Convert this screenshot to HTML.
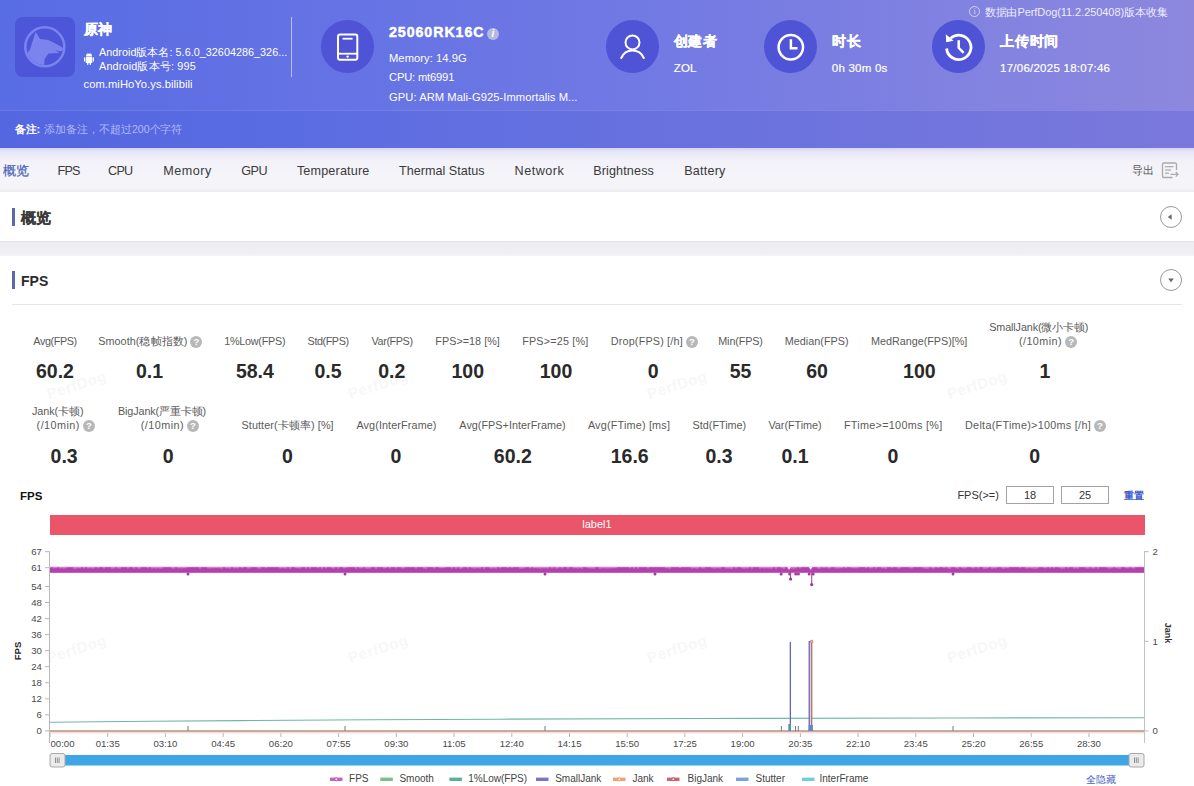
<!DOCTYPE html><html><head><meta charset="utf-8"><style>
*{margin:0;padding:0;box-sizing:border-box}
html,body{width:1194px;height:786px;overflow:hidden;background:#fff;font-family:"Liberation Sans",sans-serif;color:#333}
.a{position:absolute;white-space:nowrap}
#hdr{position:absolute;left:0;top:0;width:1194px;height:148px;background:linear-gradient(90deg,#586ce4 0%,#6f78e4 50%,#8d88de 100%)}
#note{position:absolute;left:0;top:110px;width:1194px;height:38px;background:linear-gradient(90deg,#5466e0 0%,#5a6ce2 23%,#6a72de 60%,#7a78dc 100%);border-top:1px solid rgba(255,255,255,0.13)}
.w{color:#fff}
.circ{position:absolute;width:53px;height:53px;border-radius:50%;background:#4f53d5}
.circ svg{position:absolute;left:0;top:0}
#nav{position:absolute;left:0;top:148px;width:1194px;height:44px;background:linear-gradient(180deg,#d4d4f4 0%,#e8e7f7 9%,#f3f2f9 30%,#f5f5f9 92%,#ebebef 100%)}
.bar{position:absolute;left:12px;width:3px;background:#5a6aa8}
.rbtn{position:absolute;width:22px;height:22px;border:1px solid #8a8a8a;border-radius:50%}
.q{display:inline-block;width:12px;height:12px;border-radius:50%;background:#b8b8b8;color:#fff;font-size:9.5px;line-height:12px;text-align:center;font-weight:bold;vertical-align:top;margin-top:0px;margin-left:3px}
</style></head><body>
<div id="hdr"></div><div id="note"></div>
<div class="a" style="left:15px;top:17px;width:60px;height:60px;border-radius:8px;background:#4d55d9"></div>
<svg class="a" style="left:15px;top:17px" width="60" height="60" viewBox="0 0 60 60">
<defs><clipPath id="lc"><circle cx="29.8" cy="29.8" r="18.3"/></clipPath></defs>
<circle cx="29.8" cy="29.8" r="19.5" fill="none" stroke="#7b84ee" stroke-width="2.5"/>
<path clip-path="url(#lc)" d="M20.6 14.9 L25 22 C28 22.3 31 22.5 33 23 L38 25.3 L46 29.6 L48.5 31.8 L46.5 34.2 L40.5 33.6 L44.5 36 L33.5 36.5 L29.5 42 L29 52 L8 52 L8 42 L14.9 32.8 Z" fill="#7b84ee"/>
</svg>
<div class="a" style="left:83.50px;top:22.73px;font-size:13.90px;line-height:13.90px;color:#fff;font-weight:bold;-webkit-text-stroke:0.3px #fff;letter-spacing:0.8px">原神</div>
<svg class="a" style="left:83px;top:52px" width="12" height="14" viewBox="0 0 12 14">
<path d="M2.9 4.4 A3.1 3 0 0 1 9.1 4.4 Z" fill="#fff"/>
<line x1="4" y1="1.3" x2="4.8" y2="2.4" stroke="#fff" stroke-width="0.6"/><line x1="8" y1="1.3" x2="7.2" y2="2.4" stroke="#fff" stroke-width="0.6"/>
<rect x="2.7" y="5" width="6.6" height="6" rx="0.7" fill="#fff"/>
<rect x="1" y="5.3" width="1.2" height="4.2" rx="0.6" fill="#fff"/>
<rect x="9.8" y="5.3" width="1.2" height="4.2" rx="0.6" fill="#fff"/>
<rect x="4" y="10" width="1.4" height="3" rx="0.7" fill="#fff"/>
<rect x="6.6" y="10" width="1.4" height="3" rx="0.7" fill="#fff"/>
</svg>
<div class="a" style="left:99.00px;top:47.46px;font-size:10.80px;line-height:10.80px;color:#fff"><span style="letter-spacing:0.03px">Android版本名: 5.6.0_32604286_326...</span></div>
<div class="a" style="left:99.00px;top:60.86px;font-size:10.80px;line-height:10.80px;color:#fff"><span style="letter-spacing:0.18px">Android版本号: 995</span></div>
<div class="a" style="left:83.50px;top:78.52px;font-size:11.20px;line-height:11.20px;color:#fff"><span style="letter-spacing:0.06px">com.miHoYo.ys.bilibili</span></div>
<div class="a" style="left:291px;top:17px;width:1px;height:60px;background:rgba(255,255,255,0.55)"></div>
<div class="circ" style="left:320.8px;top:20.1px"><svg width="53" height="53" viewBox="0 0 53 53"><rect x="17" y="14.6" width="19.3" height="25.2" rx="2" fill="none" stroke="#fff" stroke-width="2"/><line x1="21.6" y1="18.7" x2="31.6" y2="18.7" stroke="#fff" stroke-width="1.8"/><line x1="17" y1="33.7" x2="36.3" y2="33.7" stroke="#fff" stroke-width="1.8"/><circle cx="26.6" cy="36.6" r="1.2" fill="#fff"/></svg></div>
<div class="a" style="left:389.00px;top:25.48px;font-size:14.20px;line-height:14.20px;color:#fff;font-weight:bold;-webkit-text-stroke:0.45px #fff"><span style="letter-spacing:0.95px">25060RK16C</span></div>
<div class="a" style="left:487px;top:27.5px;width:12px;height:12px;border-radius:50%;background:#b6b9df;color:#fff;font-size:10px;font-style:italic;font-weight:bold;text-align:center;line-height:12px">i</div>
<div class="a" style="left:389.00px;top:52.52px;font-size:11.20px;line-height:11.20px;color:#fff"><span style="letter-spacing:0.05px">Memory: 14.9G</span></div>
<div class="a" style="left:389.00px;top:72.42px;font-size:11.20px;line-height:11.20px;color:#fff"><span style="letter-spacing:-0.18px">CPU: mt6991</span></div>
<div class="a" style="left:389.00px;top:91.82px;font-size:11.20px;line-height:11.20px;color:#fff"><span style="letter-spacing:0.06px">GPU: ARM Mali-G925-Immortalis M...</span></div>
<div class="circ" style="left:606.0px;top:20.1px"><svg width="53" height="53" viewBox="0 0 53 53"><circle cx="26.5" cy="22.4" r="7" fill="none" stroke="#fff" stroke-width="2"/><path d="M15.2 38 A12.2 12.2 0 0 1 37.8 38" fill="none" stroke="#fff" stroke-width="2" stroke-linecap="round"/></svg></div>
<div class="a" style="left:673.70px;top:34.83px;font-size:13.90px;line-height:13.90px;color:#fff;font-weight:bold;-webkit-text-stroke:0.3px #fff;letter-spacing:0.8px">创建者</div>
<div class="a" style="left:673.70px;top:62.57px;font-size:11.50px;line-height:11.50px;color:#fff;-webkit-text-stroke:0.2px #fff"><span style="letter-spacing:0.18px">ZOL</span></div>
<div class="circ" style="left:763.5px;top:20.1px"><svg width="53" height="53" viewBox="0 0 53 53"><circle cx="26.8" cy="27.3" r="12.2" fill="none" stroke="#fff" stroke-width="2.5"/><path d="M26.9 19.3 V28.3 H33.5" fill="none" stroke="#fff" stroke-width="2.5"/></svg></div>
<div class="a" style="left:831.80px;top:34.83px;font-size:13.90px;line-height:13.90px;color:#fff;font-weight:bold;-webkit-text-stroke:0.3px #fff;letter-spacing:0.8px">时长</div>
<div class="a" style="left:831.80px;top:62.57px;font-size:11.50px;line-height:11.50px;color:#fff;-webkit-text-stroke:0.2px #fff"><span style="letter-spacing:0.23px">0h 30m 0s</span></div>
<div class="circ" style="left:931.5px;top:20.1px"><svg width="53" height="53" viewBox="0 0 53 53"><path d="M14.6 28.5 A12.2 12.2 0 1 0 18.6 18.3" fill="none" stroke="#fff" stroke-width="2.8"/><path d="M13.8 14.3 L14.2 22.2 L21.6 20.8 Z" fill="#fff"/><path d="M26.7 20.2 V27.8 L31.6 32.8" fill="none" stroke="#fff" stroke-width="2.5"/></svg></div>
<div class="a" style="left:1000.00px;top:34.83px;font-size:13.90px;line-height:13.90px;color:#fff;font-weight:bold;-webkit-text-stroke:0.3px #fff;letter-spacing:0.8px">上传时间</div>
<div class="a" style="left:1000.00px;top:62.57px;font-size:11.50px;line-height:11.50px;color:#fff;-webkit-text-stroke:0.2px #fff"><span style="letter-spacing:0.25px">17/06/2025 18:07:46</span></div>
<div class="a" style="left:969px;top:6px;width:11px;height:11px;border:1px solid rgba(255,255,255,0.6);border-radius:50%;color:rgba(255,255,255,0.75);font-size:8px;line-height:9px;text-align:center;font-family:Liberation Serif">i</div>
<div class="a" style="left:984.60px;top:6.69px;font-size:11.00px;line-height:11.00px;color:rgba(255,255,255,0.88)"><span style="letter-spacing:-0.07px">数据由PerfDog(11.2.250408)版本收集</span></div>
<div class="a" style="left:14.50px;top:123.69px;font-size:11.00px;line-height:11.00px;color:#fff;font-weight:bold">备注:</div>
<div class="a" style="left:44.40px;top:124.03px;font-size:10.60px;line-height:10.60px;color:rgba(200,206,255,0.8)"><span style="letter-spacing:-0.05px">添加备注，不超过200个字符</span></div>
<div id="nav"></div>
<div class="a" style="left:3.10px;top:164.73px;font-size:12.60px;line-height:12.60px;color:#4862b5;-webkit-text-stroke:0.2px #4862b5"><span style="letter-spacing:0.00px">概览</span></div>
<div class="a" style="left:57.50px;top:164.73px;font-size:12.60px;line-height:12.60px;color:#3a3a3a"><span style="letter-spacing:-0.80px">FPS</span></div>
<div class="a" style="left:108.10px;top:164.73px;font-size:12.60px;line-height:12.60px;color:#3a3a3a"><span style="letter-spacing:-0.80px">CPU</span></div>
<div class="a" style="left:163.30px;top:164.73px;font-size:12.60px;line-height:12.60px;color:#3a3a3a"><span style="letter-spacing:0.52px">Memory</span></div>
<div class="a" style="left:241.20px;top:164.73px;font-size:12.60px;line-height:12.60px;color:#3a3a3a"><span style="letter-spacing:-0.50px">GPU</span></div>
<div class="a" style="left:296.90px;top:164.73px;font-size:12.60px;line-height:12.60px;color:#3a3a3a"><span style="letter-spacing:0.17px">Temperature</span></div>
<div class="a" style="left:399.00px;top:164.73px;font-size:12.60px;line-height:12.60px;color:#3a3a3a"><span style="letter-spacing:0.02px">Thermal Status</span></div>
<div class="a" style="left:514.60px;top:164.73px;font-size:12.60px;line-height:12.60px;color:#3a3a3a"><span style="letter-spacing:0.50px">Network</span></div>
<div class="a" style="left:593.20px;top:164.73px;font-size:12.60px;line-height:12.60px;color:#3a3a3a"><span style="letter-spacing:0.13px">Brightness</span></div>
<div class="a" style="left:684.20px;top:164.73px;font-size:12.60px;line-height:12.60px;color:#3a3a3a"><span style="letter-spacing:0.21px">Battery</span></div>
<div class="a" style="left:1131.80px;top:165.32px;font-size:11.20px;line-height:11.20px;color:#555">导出</div>
<svg class="a" style="left:1161px;top:162px" width="19" height="17" viewBox="0 0 19 17">
<path d="M11.5 15.5 H2.8 A1.3 1.3 0 0 1 1.5 14.2 V2.3 A1.3 1.3 0 0 1 2.8 1 H14.2 A1.3 1.3 0 0 1 15.5 2.3 V8" fill="none" stroke="#aaa" stroke-width="1.3"/>
<line x1="4" y1="4.7" x2="12.5" y2="4.7" stroke="#aaa" stroke-width="1.2"/>
<line x1="4" y1="8" x2="10" y2="8" stroke="#aaa" stroke-width="1.2"/>
<line x1="4" y1="11.2" x2="8" y2="11.2" stroke="#aaa" stroke-width="1.2"/>
<path d="M9.5 12.3 H17 M14.8 10 L17 12.3 L14.8 14.6" fill="none" stroke="#aaa" stroke-width="1.2"/>
</svg>
<div class="a" style="left:0;top:192px;width:1194px;height:49px;background:#fff"></div>
<div class="a" style="left:0;top:241px;width:1194px;height:15px;background:linear-gradient(180deg,#e3e3e7 0%,#eeeef2 12%,#f0f0f4 80%,#f4f4f7 100%)"></div>
<div class="bar" style="top:208px;height:18px"></div>
<div class="a" style="left:20.70px;top:211.23px;font-size:14.50px;line-height:14.50px;color:#3a3a3a;font-weight:bold;-webkit-text-stroke:0.15px #3a3a3a">概览</div>
<div class="rbtn" style="left:1160px;top:205.5px;border-color:#999"></div>
<svg class="a" style="left:1160px;top:205.5px" width="22" height="22"><path d="M7.8 11 L11.6 8.3 V13.7 Z" fill="#666"/></svg>
<div class="bar" style="top:271px;height:18px"></div>
<div class="a" style="left:21.00px;top:273.55px;font-size:14.00px;line-height:14.00px;color:#2a2a2a;font-weight:bold">FPS</div>
<div class="rbtn" style="left:1160px;top:269px;border-color:#999"></div>
<svg class="a" style="left:1160px;top:269px" width="22" height="22"><path d="M8.2 9.6 H13.8 L11 13.3 Z" fill="#666"/></svg>
<div class="a" style="left:12px;top:304px;width:1170px;height:1px;background:#e6e6ea"></div>
<div class="a" style="left:-95.00px;top:335.96px;width:300px;text-align:center;font-size:10.80px;line-height:10.80px;color:#5a5a5a"><span style="letter-spacing:-0.40px">Avg(FPS)</span></div>
<div class="a" style="left:-45.00px;top:361.99px;width:200px;text-align:center;font-size:19.50px;line-height:19.50px;color:#2a2a2a;font-weight:bold">60.2</div>
<div class="a" style="left:0.30px;top:335.96px;width:300px;text-align:center;font-size:10.80px;line-height:10.80px;color:#5a5a5a"><span style="letter-spacing:0.06px">Smooth(稳帧指数)</span><span class="q">?</span></div>
<div class="a" style="left:49.50px;top:361.99px;width:200px;text-align:center;font-size:19.50px;line-height:19.50px;color:#2a2a2a;font-weight:bold">0.1</div>
<div class="a" style="left:104.70px;top:335.96px;width:300px;text-align:center;font-size:10.80px;line-height:10.80px;color:#5a5a5a"><span style="letter-spacing:-0.25px">1%Low(FPS)</span></div>
<div class="a" style="left:154.90px;top:361.99px;width:200px;text-align:center;font-size:19.50px;line-height:19.50px;color:#2a2a2a;font-weight:bold">58.4</div>
<div class="a" style="left:178.10px;top:335.96px;width:300px;text-align:center;font-size:10.80px;line-height:10.80px;color:#5a5a5a"><span style="letter-spacing:-0.43px">Std(FPS)</span></div>
<div class="a" style="left:228.00px;top:361.99px;width:200px;text-align:center;font-size:19.50px;line-height:19.50px;color:#2a2a2a;font-weight:bold">0.5</div>
<div class="a" style="left:242.10px;top:335.96px;width:300px;text-align:center;font-size:10.80px;line-height:10.80px;color:#5a5a5a"><span style="letter-spacing:-0.39px">Var(FPS)</span></div>
<div class="a" style="left:291.80px;top:361.99px;width:200px;text-align:center;font-size:19.50px;line-height:19.50px;color:#2a2a2a;font-weight:bold">0.2</div>
<div class="a" style="left:317.60px;top:335.96px;width:300px;text-align:center;font-size:10.80px;line-height:10.80px;color:#5a5a5a"><span style="letter-spacing:0.03px">FPS&gt;=18 [%]</span></div>
<div class="a" style="left:367.80px;top:361.99px;width:200px;text-align:center;font-size:19.50px;line-height:19.50px;color:#2a2a2a;font-weight:bold">100</div>
<div class="a" style="left:405.30px;top:335.96px;width:300px;text-align:center;font-size:10.80px;line-height:10.80px;color:#5a5a5a"><span style="letter-spacing:0.18px">FPS&gt;=25 [%]</span></div>
<div class="a" style="left:456.00px;top:361.99px;width:200px;text-align:center;font-size:19.50px;line-height:19.50px;color:#2a2a2a;font-weight:bold">100</div>
<div class="a" style="left:504.30px;top:335.96px;width:300px;text-align:center;font-size:10.80px;line-height:10.80px;color:#5a5a5a"><span style="letter-spacing:0.18px">Drop(FPS) [/h]</span><span class="q">?</span></div>
<div class="a" style="left:553.30px;top:361.99px;width:200px;text-align:center;font-size:19.50px;line-height:19.50px;color:#2a2a2a;font-weight:bold">0</div>
<div class="a" style="left:590.50px;top:335.96px;width:300px;text-align:center;font-size:10.80px;line-height:10.80px;color:#5a5a5a"><span style="letter-spacing:-0.14px">Min(FPS)</span></div>
<div class="a" style="left:640.50px;top:361.99px;width:200px;text-align:center;font-size:19.50px;line-height:19.50px;color:#2a2a2a;font-weight:bold">55</div>
<div class="a" style="left:666.70px;top:335.96px;width:300px;text-align:center;font-size:10.80px;line-height:10.80px;color:#5a5a5a"><span style="letter-spacing:0.04px">Median(FPS)</span></div>
<div class="a" style="left:717.00px;top:361.99px;width:200px;text-align:center;font-size:19.50px;line-height:19.50px;color:#2a2a2a;font-weight:bold">60</div>
<div class="a" style="left:769.20px;top:335.96px;width:300px;text-align:center;font-size:10.80px;line-height:10.80px;color:#5a5a5a"><span style="letter-spacing:-0.02px">MedRange(FPS)[%]</span></div>
<div class="a" style="left:819.40px;top:361.99px;width:200px;text-align:center;font-size:19.50px;line-height:19.50px;color:#2a2a2a;font-weight:bold">100</div>
<div class="a" style="left:888.80px;top:321.96px;width:300px;text-align:center;font-size:10.80px;line-height:10.80px;color:#5a5a5a"><span style="letter-spacing:-0.13px">SmallJank(微小卡顿)</span></div>
<div class="a" style="left:898.00px;top:335.96px;width:300px;text-align:center;font-size:10.80px;line-height:10.80px;color:#5a5a5a"><span style="letter-spacing:0.45px">(/10min)</span><span class="q">?</span></div>
<div class="a" style="left:945.00px;top:361.99px;width:200px;text-align:center;font-size:19.50px;line-height:19.50px;color:#2a2a2a;font-weight:bold">1</div>
<div class="a" style="left:-92.20px;top:406.06px;width:300px;text-align:center;font-size:10.80px;line-height:10.80px;color:#5a5a5a"><span style="letter-spacing:-0.05px">Jank(卡顿)</span></div>
<div class="a" style="left:-84.30px;top:420.06px;width:300px;text-align:center;font-size:10.80px;line-height:10.80px;color:#5a5a5a"><span style="letter-spacing:0.45px">(/10min)</span><span class="q">?</span></div>
<div class="a" style="left:-35.90px;top:446.69px;width:200px;text-align:center;font-size:19.50px;line-height:19.50px;color:#2a2a2a;font-weight:bold">0.3</div>
<div class="a" style="left:12.00px;top:406.06px;width:300px;text-align:center;font-size:10.80px;line-height:10.80px;color:#5a5a5a"><span style="letter-spacing:-0.13px">BigJank(严重卡顿)</span></div>
<div class="a" style="left:19.90px;top:420.06px;width:300px;text-align:center;font-size:10.80px;line-height:10.80px;color:#5a5a5a"><span style="letter-spacing:0.45px">(/10min)</span><span class="q">?</span></div>
<div class="a" style="left:68.30px;top:446.69px;width:200px;text-align:center;font-size:19.50px;line-height:19.50px;color:#2a2a2a;font-weight:bold">0</div>
<div class="a" style="left:137.60px;top:420.06px;width:300px;text-align:center;font-size:10.80px;line-height:10.80px;color:#5a5a5a"><span style="letter-spacing:0.10px">Stutter(卡顿率) [%]</span></div>
<div class="a" style="left:187.40px;top:446.69px;width:200px;text-align:center;font-size:19.50px;line-height:19.50px;color:#2a2a2a;font-weight:bold">0</div>
<div class="a" style="left:246.50px;top:420.06px;width:300px;text-align:center;font-size:10.80px;line-height:10.80px;color:#5a5a5a"><span style="letter-spacing:0.12px">Avg(InterFrame)</span></div>
<div class="a" style="left:296.00px;top:446.69px;width:200px;text-align:center;font-size:19.50px;line-height:19.50px;color:#2a2a2a;font-weight:bold">0</div>
<div class="a" style="left:362.50px;top:420.06px;width:300px;text-align:center;font-size:10.80px;line-height:10.80px;color:#5a5a5a"><span style="letter-spacing:0.03px">Avg(FPS+InterFrame)</span></div>
<div class="a" style="left:412.80px;top:446.69px;width:200px;text-align:center;font-size:19.50px;line-height:19.50px;color:#2a2a2a;font-weight:bold">60.2</div>
<div class="a" style="left:479.00px;top:420.06px;width:300px;text-align:center;font-size:10.80px;line-height:10.80px;color:#5a5a5a"><span style="letter-spacing:0.20px">Avg(FTime) [ms]</span></div>
<div class="a" style="left:529.70px;top:446.69px;width:200px;text-align:center;font-size:19.50px;line-height:19.50px;color:#2a2a2a;font-weight:bold">16.6</div>
<div class="a" style="left:569.40px;top:420.06px;width:300px;text-align:center;font-size:10.80px;line-height:10.80px;color:#5a5a5a"><span style="letter-spacing:-0.00px">Std(FTime)</span></div>
<div class="a" style="left:619.00px;top:446.69px;width:200px;text-align:center;font-size:19.50px;line-height:19.50px;color:#2a2a2a;font-weight:bold">0.3</div>
<div class="a" style="left:645.00px;top:420.06px;width:300px;text-align:center;font-size:10.80px;line-height:10.80px;color:#5a5a5a"><span style="letter-spacing:-0.04px">Var(FTime)</span></div>
<div class="a" style="left:695.00px;top:446.69px;width:200px;text-align:center;font-size:19.50px;line-height:19.50px;color:#2a2a2a;font-weight:bold">0.1</div>
<div class="a" style="left:743.20px;top:420.06px;width:300px;text-align:center;font-size:10.80px;line-height:10.80px;color:#5a5a5a"><span style="letter-spacing:0.30px">FTime&gt;=100ms [%]</span></div>
<div class="a" style="left:793.00px;top:446.69px;width:200px;text-align:center;font-size:19.50px;line-height:19.50px;color:#2a2a2a;font-weight:bold">0</div>
<div class="a" style="left:885.50px;top:420.06px;width:300px;text-align:center;font-size:10.80px;line-height:10.80px;color:#5a5a5a"><span style="letter-spacing:0.29px">Delta(FTime)&gt;100ms [/h]</span><span class="q">?</span></div>
<div class="a" style="left:934.70px;top:446.69px;width:200px;text-align:center;font-size:19.50px;line-height:19.50px;color:#2a2a2a;font-weight:bold">0</div>
<div class="a" style="left:20.00px;top:491.27px;font-size:11.50px;line-height:11.50px;color:#111;font-weight:bold">FPS</div>
<div class="a" style="left:957.40px;top:490.19px;font-size:11.00px;line-height:11.00px;color:#333">FPS(&gt;=)</div>
<div class="a" style="left:1006px;top:486px;width:48px;height:18px;border:1px solid #a3a3a3;font-size:11px;text-align:center;line-height:16px;color:#333">18</div>
<div class="a" style="left:1061px;top:486px;width:48px;height:18px;border:1px solid #a3a3a3;font-size:11px;text-align:center;line-height:16px;color:#333">25</div>
<div class="a" style="left:1124.00px;top:491.04px;font-size:10.00px;line-height:10.00px;color:#3b5bc8;font-weight:bold">重置</div>
<div class="a" style="left:50px;top:514.5px;width:1095px;height:20px;background:#ea5569"></div>
<div class="a" style="left:497.00px;top:518.69px;width:200px;text-align:center;font-size:11.00px;line-height:11.00px;color:#fff">label1</div>
<svg class="a" style="left:0;top:0" width="1194" height="786" viewBox="0 0 1194 786"><line x1="49.5" y1="551" x2="49.5" y2="743" stroke="#b8b8b8" stroke-width="1"/><line x1="1144.5" y1="551" x2="1144.5" y2="743" stroke="#c2c2c2" stroke-width="1"/><line x1="45" y1="730.9" x2="49.5" y2="730.9" stroke="#b8b8b8" stroke-width="1"/><line x1="45" y1="714.9" x2="49.5" y2="714.9" stroke="#b8b8b8" stroke-width="1"/><line x1="45" y1="698.8" x2="49.5" y2="698.8" stroke="#b8b8b8" stroke-width="1"/><line x1="45" y1="682.8" x2="49.5" y2="682.8" stroke="#b8b8b8" stroke-width="1"/><line x1="45" y1="666.7" x2="49.5" y2="666.7" stroke="#b8b8b8" stroke-width="1"/><line x1="45" y1="650.7" x2="49.5" y2="650.7" stroke="#b8b8b8" stroke-width="1"/><line x1="45" y1="634.6" x2="49.5" y2="634.6" stroke="#b8b8b8" stroke-width="1"/><line x1="45" y1="618.6" x2="49.5" y2="618.6" stroke="#b8b8b8" stroke-width="1"/><line x1="45" y1="602.5" x2="49.5" y2="602.5" stroke="#b8b8b8" stroke-width="1"/><line x1="45" y1="586.5" x2="49.5" y2="586.5" stroke="#b8b8b8" stroke-width="1"/><line x1="45" y1="567.7" x2="49.5" y2="567.7" stroke="#b8b8b8" stroke-width="1"/><line x1="45" y1="551.7" x2="49.5" y2="551.7" stroke="#b8b8b8" stroke-width="1"/><line x1="1144.5" y1="551.7" x2="1148.5" y2="551.7" stroke="#b8b8b8" stroke-width="1"/><line x1="1144.5" y1="641.3" x2="1148.5" y2="641.3" stroke="#b8b8b8" stroke-width="1"/><line x1="1144.5" y1="730.9" x2="1148.5" y2="730.9" stroke="#b8b8b8" stroke-width="1"/><line x1="50.0" y1="733" x2="50.0" y2="737" stroke="#b8b8b8" stroke-width="1"/><line x1="107.7" y1="733" x2="107.7" y2="737" stroke="#b8b8b8" stroke-width="1"/><line x1="165.4" y1="733" x2="165.4" y2="737" stroke="#b8b8b8" stroke-width="1"/><line x1="223.2" y1="733" x2="223.2" y2="737" stroke="#b8b8b8" stroke-width="1"/><line x1="280.9" y1="733" x2="280.9" y2="737" stroke="#b8b8b8" stroke-width="1"/><line x1="338.6" y1="733" x2="338.6" y2="737" stroke="#b8b8b8" stroke-width="1"/><line x1="396.3" y1="733" x2="396.3" y2="737" stroke="#b8b8b8" stroke-width="1"/><line x1="454.0" y1="733" x2="454.0" y2="737" stroke="#b8b8b8" stroke-width="1"/><line x1="511.8" y1="733" x2="511.8" y2="737" stroke="#b8b8b8" stroke-width="1"/><line x1="569.5" y1="733" x2="569.5" y2="737" stroke="#b8b8b8" stroke-width="1"/><line x1="627.2" y1="733" x2="627.2" y2="737" stroke="#b8b8b8" stroke-width="1"/><line x1="684.9" y1="733" x2="684.9" y2="737" stroke="#b8b8b8" stroke-width="1"/><line x1="742.6" y1="733" x2="742.6" y2="737" stroke="#b8b8b8" stroke-width="1"/><line x1="800.4" y1="733" x2="800.4" y2="737" stroke="#b8b8b8" stroke-width="1"/><line x1="858.1" y1="733" x2="858.1" y2="737" stroke="#b8b8b8" stroke-width="1"/><line x1="915.8" y1="733" x2="915.8" y2="737" stroke="#b8b8b8" stroke-width="1"/><line x1="973.5" y1="733" x2="973.5" y2="737" stroke="#b8b8b8" stroke-width="1"/><line x1="1031.2" y1="733" x2="1031.2" y2="737" stroke="#b8b8b8" stroke-width="1"/><line x1="1089.0" y1="733" x2="1089.0" y2="737" stroke="#b8b8b8" stroke-width="1"/><polyline points="50,722.3 150,721.3 240,720.6 370,719.8 500,719.2 700,718.5 950,718 1144,717.7" fill="none" stroke="#6cb8a8" stroke-width="1.1"/><line x1="50" y1="732.8" x2="1144" y2="732.8" stroke="#f3cdcd" stroke-width="1"/><line x1="50" y1="731" x2="1144" y2="731" stroke="#b0917f" stroke-width="1.7"/><rect x="50" y="567" width="1094" height="5.8" fill="#b43fae"/><rect x="50" y="566.4" width="1094" height="0.8" fill="#ecc4e8"/><path d="M50.0 567 V568.3 M54.0 567 V568.5 M56.0 567 V568.2 M60.0 567 V568.5 M62.0 567 V568.3 M64.0 567 V568.7 M66.0 567 V568.3 M74.0 567 V568.8 M76.0 567 V568.7 M78.0 567 V568.3 M80.0 567 V568.4 M84.0 567 V568.5 M88.0 567 V568.5 M90.0 567 V568.2 M92.0 567 V568.6 M94.0 567 V568.4 M98.0 567 V568.4 M104.0 567 V568.5 M112.0 567 V568.8 M114.0 567 V568.5 M118.0 567 V568.5 M120.0 567 V568.6 M128.0 567 V568.6 M134.0 567 V568.7 M138.0 567 V568.6 M140.0 567 V568.6 M148.0 567 V568.4 M152.0 567 V568.5 M154.0 567 V568.3 M156.0 567 V568.7 M158.0 567 V568.3 M160.0 567 V568.7 M162.0 567 V568.5 M172.0 567 V568.4 M174.0 567 V568.7 M178.0 567 V568.3 M180.0 567 V568.3 M182.0 567 V568.6 M184.0 567 V568.2 M186.0 567 V568.4 M200.0 567 V568.7 M208.0 567 V568.4 M210.0 567 V568.6 M212.0 567 V568.2 M214.0 567 V568.3 M216.0 567 V568.2 M218.0 567 V568.3 M220.0 567 V568.4 M222.0 567 V568.7 M226.0 567 V568.4 M228.0 567 V568.4 M230.0 567 V568.7 M234.0 567 V568.5 M236.0 567 V568.3 M238.0 567 V568.4 M242.0 567 V568.2 M248.0 567 V568.5 M250.0 567 V568.5 M258.0 567 V568.4 M260.0 567 V568.7 M266.0 567 V568.3 M280.0 567 V568.5 M282.0 567 V568.2 M284.0 567 V568.4 M286.0 567 V568.6 M290.0 567 V568.8 M296.0 567 V568.3 M298.0 567 V568.3 M300.0 567 V568.6 M306.0 567 V568.6 M310.0 567 V568.6 M318.0 567 V568.3 M322.0 567 V568.7 M326.0 567 V568.4 M332.0 567 V568.3 M334.0 567 V568.7 M338.0 567 V568.7 M344.0 567 V568.5 M346.0 567 V568.2 M356.0 567 V568.7 M360.0 567 V568.4 M362.0 567 V568.3 M366.0 567 V568.5 M368.0 567 V568.7 M370.0 567 V568.5 M376.0 567 V568.8 M384.0 567 V568.5 M386.0 567 V568.2 M390.0 567 V568.5 M396.0 567 V568.5 M402.0 567 V568.5 M404.0 567 V568.4 M416.0 567 V568.6 M424.0 567 V568.5 M426.0 567 V568.8 M434.0 567 V568.5 M440.0 567 V568.3 M442.0 567 V568.2 M444.0 567 V568.2 M452.0 567 V568.6 M456.0 567 V568.7 M460.0 567 V568.8 M462.0 567 V568.5 M468.0 567 V568.5 M472.0 567 V568.3 M474.0 567 V568.6 M476.0 567 V568.5 M478.0 567 V568.2 M480.0 567 V568.6 M484.0 567 V568.8 M490.0 567 V568.4 M492.0 567 V568.7 M494.0 567 V568.3 M496.0 567 V568.7 M500.0 567 V568.3 M508.0 567 V568.2 M512.0 567 V568.2 M520.0 567 V568.7 M522.0 567 V568.7 M524.0 567 V568.4 M530.0 567 V568.3 M534.0 567 V568.3 M536.0 567 V568.2 M538.0 567 V568.4 M540.0 567 V568.7 M542.0 567 V568.5 M544.0 567 V568.4 M546.0 567 V568.4 M548.0 567 V568.6 M552.0 567 V568.5 M556.0 567 V568.7 M558.0 567 V568.5 M562.0 567 V568.5 M568.0 567 V568.7 M574.0 567 V568.4 M576.0 567 V568.3 M578.0 567 V568.6 M580.0 567 V568.3 M582.0 567 V568.7 M588.0 567 V568.3 M590.0 567 V568.5 M592.0 567 V568.5 M594.0 567 V568.8 M600.0 567 V568.8 M602.0 567 V568.4 M604.0 567 V568.4 M606.0 567 V568.5 M608.0 567 V568.5 M610.0 567 V568.4 M612.0 567 V568.4 M614.0 567 V568.2 M616.0 567 V568.3 M630.0 567 V568.4 M634.0 567 V568.6 M638.0 567 V568.7 M648.0 567 V568.5 M666.0 567 V568.2 M668.0 567 V568.4 M670.0 567 V568.7 M680.0 567 V568.2 M692.0 567 V568.6 M694.0 567 V568.2 M696.0 567 V568.6 M698.0 567 V568.6 M702.0 567 V568.4 M704.0 567 V568.6 M712.0 567 V568.3 M714.0 567 V568.6 M716.0 567 V568.5 M718.0 567 V568.2 M720.0 567 V568.6 M726.0 567 V568.5 M728.0 567 V568.5 M730.0 567 V568.7 M732.0 567 V568.8 M736.0 567 V568.5 M742.0 567 V568.4 M744.0 567 V568.8 M746.0 567 V568.5 M748.0 567 V568.5 M752.0 567 V568.7 M760.0 567 V568.7 M762.0 567 V568.2 M764.0 567 V568.5 M766.0 567 V568.4 M768.0 567 V568.4 M770.0 567 V568.7 M772.0 567 V568.7 M776.0 567 V568.8 M782.0 567 V568.4 M784.0 567 V568.8 M788.0 567 V568.5 M790.0 567 V568.2 M792.0 567 V568.7 M794.0 567 V568.8 M796.0 567 V568.4 M800.0 567 V568.4 M818.0 567 V568.6 M820.0 567 V568.7 M824.0 567 V568.2 M828.0 567 V568.5 M830.0 567 V568.4 M836.0 567 V568.6 M838.0 567 V568.5 M840.0 567 V568.3 M842.0 567 V568.3 M846.0 567 V568.3 M852.0 567 V568.3 M854.0 567 V568.3 M856.0 567 V568.3 M858.0 567 V568.4 M866.0 567 V568.4 M870.0 567 V568.4 M872.0 567 V568.4 M876.0 567 V568.5 M882.0 567 V568.4 M884.0 567 V568.4 M886.0 567 V568.8 M892.0 567 V568.2 M898.0 567 V568.6 M900.0 567 V568.4 M910.0 567 V568.3 M912.0 567 V568.5 M924.0 567 V568.5 M926.0 567 V568.7 M928.0 567 V568.8 M932.0 567 V568.3 M934.0 567 V568.6 M938.0 567 V568.2 M944.0 567 V568.3 M948.0 567 V568.4 M950.0 567 V568.8 M956.0 567 V568.3 M958.0 567 V568.8 M962.0 567 V568.2 M964.0 567 V568.6 M966.0 567 V568.4 M972.0 567 V568.2 M974.0 567 V568.5 M978.0 567 V568.7 M984.0 567 V568.8 M986.0 567 V568.7 M988.0 567 V568.3 M992.0 567 V568.8 M994.0 567 V568.3 M996.0 567 V568.5 M1002.0 567 V568.4 M1004.0 567 V568.8 M1006.0 567 V568.2 M1008.0 567 V568.4 M1020.0 567 V568.3 M1026.0 567 V568.6 M1028.0 567 V568.4 M1030.0 567 V568.3 M1032.0 567 V568.4 M1034.0 567 V568.8 M1036.0 567 V568.8 M1038.0 567 V568.4 M1044.0 567 V568.2 M1046.0 567 V568.4 M1050.0 567 V568.4 M1054.0 567 V568.4 M1060.0 567 V568.2 M1062.0 567 V568.8 M1064.0 567 V568.6 M1068.0 567 V568.4 M1074.0 567 V568.6 M1076.0 567 V568.4 M1078.0 567 V568.7 M1086.0 567 V568.3 M1088.0 567 V568.8 M1092.0 567 V568.4 M1094.0 567 V568.5 M1098.0 567 V568.7 M1108.0 567 V568.4 M1110.0 567 V568.7 M1112.0 567 V568.3 M1116.0 567 V568.2 M1118.0 567 V568.5 M1120.0 567 V568.8 M1126.0 567 V568.3 M1128.0 567 V568.5 M1132.0 567 V568.3 M1134.0 567 V568.6" stroke="#e8c0e4" stroke-width="0.8" fill="none"/><path d="M786.9 566.8 L789.1 570 L791.3 566.8 Z" fill="#fff"/><path d="M786.9 567 L789.1 570.2 L791.3 567" fill="none" stroke="#c060bc" stroke-width="0.8"/><path d="M808.5 566.8 L810.7 570 L812.9 566.8 Z" fill="#fff"/><path d="M808.5 567 L810.7 570.2 L812.9 567" fill="none" stroke="#c060bc" stroke-width="0.8"/><circle cx="188.0" cy="574" r="1.5" fill="#a03c98"/><circle cx="345.0" cy="574" r="1.5" fill="#a03c98"/><circle cx="545.0" cy="574" r="1.5" fill="#a03c98"/><circle cx="655.0" cy="574" r="1.5" fill="#a03c98"/><circle cx="953.0" cy="574" r="1.5" fill="#a03c98"/><circle cx="781.1" cy="574" r="1.5" fill="#a03c98"/><circle cx="789.6" cy="574" r="1.5" fill="#a03c98"/><circle cx="795.7" cy="574" r="1.5" fill="#a03c98"/><circle cx="798.4" cy="574" r="1.5" fill="#a03c98"/><circle cx="809.2" cy="574" r="1.5" fill="#a03c98"/><circle cx="813.2" cy="574" r="1.5" fill="#a03c98"/><line x1="790.6" y1="572" x2="790.6" y2="579.1" stroke="#a8489f" stroke-width="1.1"/><circle cx="790.6" cy="579.1" r="1.6" fill="#9a3a90"/><line x1="811.7" y1="572" x2="811.7" y2="584.6" stroke="#a8489f" stroke-width="1.1"/><circle cx="811.7" cy="584.6" r="1.6" fill="#9a3a90"/><rect x="789.7" y="642" width="1.3" height="89" fill="#6664bc"/><rect x="788.3" y="724" width="2.7" height="7" fill="#5b8fb0"/><rect x="808.6" y="641" width="1.3" height="90" fill="#6a5ab4"/><rect x="810.9" y="641" width="1.5" height="90" fill="#b47a74"/><rect x="809.9" y="641" width="1" height="90" fill="#d8cce0"/><circle cx="811.6" cy="641.5" r="1.4" fill="#e8a8a0" stroke="#b47a74" stroke-width="0.6"/><rect x="808.6" y="725" width="4.3" height="6" fill="#6a84c4"/><line x1="188.0" y1="731" x2="188.0" y2="726" stroke="#6f7f80" stroke-width="1"/><line x1="345.0" y1="731" x2="345.0" y2="726" stroke="#6f7f80" stroke-width="1"/><line x1="545.0" y1="731" x2="545.0" y2="726" stroke="#6f7f80" stroke-width="1"/><line x1="953.0" y1="731" x2="953.0" y2="726" stroke="#6f7f80" stroke-width="1"/><line x1="781.4" y1="731" x2="781.4" y2="726" stroke="#6f7f80" stroke-width="1"/><line x1="795.5" y1="731" x2="795.5" y2="726" stroke="#6f7f80" stroke-width="1"/><line x1="798.3" y1="731" x2="798.3" y2="726" stroke="#6f7f80" stroke-width="1"/><rect x="50" y="755" width="1094" height="10.5" fill="#3ea5e7"/><rect x="50.0" y="753.5" width="15" height="13.5" rx="2" fill="#ebebeb" stroke="#a8a8a8" stroke-width="1"/><line x1="55.5" y1="757.5" x2="55.5" y2="763" stroke="#777" stroke-width="0.8"/><line x1="57.3" y1="757.5" x2="57.3" y2="763" stroke="#777" stroke-width="0.8"/><line x1="59.1" y1="757.5" x2="59.1" y2="763" stroke="#777" stroke-width="0.8"/><rect x="1129.0" y="753.5" width="15" height="13.5" rx="2" fill="#ebebeb" stroke="#a8a8a8" stroke-width="1"/><line x1="1134.5" y1="757.5" x2="1134.5" y2="763" stroke="#777" stroke-width="0.8"/><line x1="1136.3" y1="757.5" x2="1136.3" y2="763" stroke="#777" stroke-width="0.8"/><line x1="1138.1" y1="757.5" x2="1138.1" y2="763" stroke="#777" stroke-width="0.8"/><text x="0" y="0" transform="translate(21.3,651) rotate(-90)" text-anchor="middle" font-family="Liberation Sans" font-size="9.5" font-weight="bold" fill="#222">FPS</text><text x="0" y="0" transform="translate(1165.3,633) rotate(90)" text-anchor="middle" font-family="Liberation Sans" font-size="9" font-weight="bold" fill="#333">Jank</text><line x1="330.0" y1="779.3" x2="342.5" y2="779.3" stroke="#b141ad" stroke-width="3.4" opacity="0.8"/><circle cx="336.3" cy="779.3" r="1.5" fill="#fbe8ee" stroke="#b141ad" stroke-width="0.9"/><line x1="380.3" y1="779.3" x2="392.8" y2="779.3" stroke="#5dae6c" stroke-width="3.4" opacity="0.8"/><line x1="449.4" y1="779.3" x2="461.9" y2="779.3" stroke="#2e9c84" stroke-width="3.4" opacity="0.8"/><line x1="536.0" y1="779.3" x2="548.5" y2="779.3" stroke="#5a52c0" stroke-width="3.4" opacity="0.8"/><line x1="613.0" y1="779.3" x2="625.5" y2="779.3" stroke="#ee8a55" stroke-width="3.4" opacity="0.8"/><circle cx="619.3" cy="779.3" r="1.5" fill="#fbe8ee" stroke="#ee8a55" stroke-width="0.9"/><line x1="667.0" y1="779.3" x2="679.5" y2="779.3" stroke="#c0404a" stroke-width="3.4" opacity="0.8"/><circle cx="673.3" cy="779.3" r="1.5" fill="#fbe8ee" stroke="#c0404a" stroke-width="0.9"/><line x1="736.0" y1="779.3" x2="748.5" y2="779.3" stroke="#5b8bd0" stroke-width="3.4" opacity="0.8"/><line x1="802.0" y1="779.3" x2="814.5" y2="779.3" stroke="#50c0d8" stroke-width="3.4" opacity="0.8"/><text x="0" y="0" transform="translate(77.0,386) rotate(-18)" text-anchor="middle" dominant-baseline="middle" font-family="Liberation Sans" font-size="15" font-weight="bold" letter-spacing="0.5" fill="#000" opacity="0.028">PerfDog</text><text x="0" y="0" transform="translate(77.0,650) rotate(-18)" text-anchor="middle" dominant-baseline="middle" font-family="Liberation Sans" font-size="15" font-weight="bold" letter-spacing="0.5" fill="#000" opacity="0.028">PerfDog</text><text x="0" y="0" transform="translate(378.5,386) rotate(-18)" text-anchor="middle" dominant-baseline="middle" font-family="Liberation Sans" font-size="15" font-weight="bold" letter-spacing="0.5" fill="#000" opacity="0.028">PerfDog</text><text x="0" y="0" transform="translate(378.5,650) rotate(-18)" text-anchor="middle" dominant-baseline="middle" font-family="Liberation Sans" font-size="15" font-weight="bold" letter-spacing="0.5" fill="#000" opacity="0.028">PerfDog</text><text x="0" y="0" transform="translate(677.5,386) rotate(-18)" text-anchor="middle" dominant-baseline="middle" font-family="Liberation Sans" font-size="15" font-weight="bold" letter-spacing="0.5" fill="#000" opacity="0.028">PerfDog</text><text x="0" y="0" transform="translate(677.5,650) rotate(-18)" text-anchor="middle" dominant-baseline="middle" font-family="Liberation Sans" font-size="15" font-weight="bold" letter-spacing="0.5" fill="#000" opacity="0.028">PerfDog</text><text x="0" y="0" transform="translate(977.5,386) rotate(-18)" text-anchor="middle" dominant-baseline="middle" font-family="Liberation Sans" font-size="15" font-weight="bold" letter-spacing="0.5" fill="#000" opacity="0.028">PerfDog</text><text x="0" y="0" transform="translate(977.5,650) rotate(-18)" text-anchor="middle" dominant-baseline="middle" font-family="Liberation Sans" font-size="15" font-weight="bold" letter-spacing="0.5" fill="#000" opacity="0.028">PerfDog</text></svg>
<div class="a" style="left:0px;top:726.17px;width:41.8px;text-align:right;font-size:9.6px;line-height:9.6px;color:#4a4a4a">0</div>
<div class="a" style="left:0px;top:710.13px;width:41.8px;text-align:right;font-size:9.6px;line-height:9.6px;color:#4a4a4a">6</div>
<div class="a" style="left:0px;top:694.08px;width:41.8px;text-align:right;font-size:9.6px;line-height:9.6px;color:#4a4a4a">12</div>
<div class="a" style="left:0px;top:678.03px;width:41.8px;text-align:right;font-size:9.6px;line-height:9.6px;color:#4a4a4a">18</div>
<div class="a" style="left:0px;top:661.98px;width:41.8px;text-align:right;font-size:9.6px;line-height:9.6px;color:#4a4a4a">24</div>
<div class="a" style="left:0px;top:645.93px;width:41.8px;text-align:right;font-size:9.6px;line-height:9.6px;color:#4a4a4a">30</div>
<div class="a" style="left:0px;top:629.89px;width:41.8px;text-align:right;font-size:9.6px;line-height:9.6px;color:#4a4a4a">36</div>
<div class="a" style="left:0px;top:613.84px;width:41.8px;text-align:right;font-size:9.6px;line-height:9.6px;color:#4a4a4a">42</div>
<div class="a" style="left:0px;top:597.79px;width:41.8px;text-align:right;font-size:9.6px;line-height:9.6px;color:#4a4a4a">48</div>
<div class="a" style="left:0px;top:581.74px;width:41.8px;text-align:right;font-size:9.6px;line-height:9.6px;color:#4a4a4a">54</div>
<div class="a" style="left:0px;top:563.02px;width:41.8px;text-align:right;font-size:9.6px;line-height:9.6px;color:#4a4a4a">61</div>
<div class="a" style="left:0px;top:546.97px;width:41.8px;text-align:right;font-size:9.6px;line-height:9.6px;color:#4a4a4a">67</div>
<div class="a" style="left:1152.50px;top:546.97px;font-size:9.60px;line-height:9.60px;color:#4a4a4a">2</div>
<div class="a" style="left:1152.50px;top:636.57px;font-size:9.60px;line-height:9.60px;color:#4a4a4a">1</div>
<div class="a" style="left:1152.50px;top:726.17px;font-size:9.60px;line-height:9.60px;color:#4a4a4a">0</div>
<div class="a" style="left:50.50px;top:739.07px;font-size:9.60px;line-height:9.60px;color:#4a4a4a">00:00</div>
<div class="a" style="left:77.72px;top:739.07px;width:60px;text-align:center;font-size:9.60px;line-height:9.60px;color:#4a4a4a">01:35</div>
<div class="a" style="left:135.44px;top:739.07px;width:60px;text-align:center;font-size:9.60px;line-height:9.60px;color:#4a4a4a">03:10</div>
<div class="a" style="left:193.16px;top:739.07px;width:60px;text-align:center;font-size:9.60px;line-height:9.60px;color:#4a4a4a">04:45</div>
<div class="a" style="left:250.88px;top:739.07px;width:60px;text-align:center;font-size:9.60px;line-height:9.60px;color:#4a4a4a">06:20</div>
<div class="a" style="left:308.60px;top:739.07px;width:60px;text-align:center;font-size:9.60px;line-height:9.60px;color:#4a4a4a">07:55</div>
<div class="a" style="left:366.32px;top:739.07px;width:60px;text-align:center;font-size:9.60px;line-height:9.60px;color:#4a4a4a">09:30</div>
<div class="a" style="left:424.04px;top:739.07px;width:60px;text-align:center;font-size:9.60px;line-height:9.60px;color:#4a4a4a">11:05</div>
<div class="a" style="left:481.76px;top:739.07px;width:60px;text-align:center;font-size:9.60px;line-height:9.60px;color:#4a4a4a">12:40</div>
<div class="a" style="left:539.48px;top:739.07px;width:60px;text-align:center;font-size:9.60px;line-height:9.60px;color:#4a4a4a">14:15</div>
<div class="a" style="left:597.20px;top:739.07px;width:60px;text-align:center;font-size:9.60px;line-height:9.60px;color:#4a4a4a">15:50</div>
<div class="a" style="left:654.92px;top:739.07px;width:60px;text-align:center;font-size:9.60px;line-height:9.60px;color:#4a4a4a">17:25</div>
<div class="a" style="left:712.64px;top:739.07px;width:60px;text-align:center;font-size:9.60px;line-height:9.60px;color:#4a4a4a">19:00</div>
<div class="a" style="left:770.36px;top:739.07px;width:60px;text-align:center;font-size:9.60px;line-height:9.60px;color:#4a4a4a">20:35</div>
<div class="a" style="left:828.08px;top:739.07px;width:60px;text-align:center;font-size:9.60px;line-height:9.60px;color:#4a4a4a">22:10</div>
<div class="a" style="left:885.80px;top:739.07px;width:60px;text-align:center;font-size:9.60px;line-height:9.60px;color:#4a4a4a">23:45</div>
<div class="a" style="left:943.52px;top:739.07px;width:60px;text-align:center;font-size:9.60px;line-height:9.60px;color:#4a4a4a">25:20</div>
<div class="a" style="left:1001.24px;top:739.07px;width:60px;text-align:center;font-size:9.60px;line-height:9.60px;color:#4a4a4a">26:55</div>
<div class="a" style="left:1058.96px;top:739.07px;width:60px;text-align:center;font-size:9.60px;line-height:9.60px;color:#4a4a4a">28:30</div>
<div class="a" style="left:349.10px;top:773.93px;font-size:10.00px;line-height:10.00px;color:#444">FPS</div>
<div class="a" style="left:399.40px;top:773.93px;font-size:10.00px;line-height:10.00px;color:#444">Smooth</div>
<div class="a" style="left:468.20px;top:773.93px;font-size:10.00px;line-height:10.00px;color:#444">1%Low(FPS)</div>
<div class="a" style="left:555.20px;top:773.93px;font-size:10.00px;line-height:10.00px;color:#444">SmallJank</div>
<div class="a" style="left:632.50px;top:773.93px;font-size:10.00px;line-height:10.00px;color:#444">Jank</div>
<div class="a" style="left:687.50px;top:773.93px;font-size:10.00px;line-height:10.00px;color:#444">BigJank</div>
<div class="a" style="left:755.50px;top:773.93px;font-size:10.00px;line-height:10.00px;color:#444">Stutter</div>
<div class="a" style="left:819.50px;top:773.93px;font-size:10.00px;line-height:10.00px;color:#444">InterFrame</div>
<div class="a" style="left:1086.00px;top:774.70px;font-size:9.80px;line-height:9.80px;color:#4a5fc0">全隐藏</div>
</body></html>
